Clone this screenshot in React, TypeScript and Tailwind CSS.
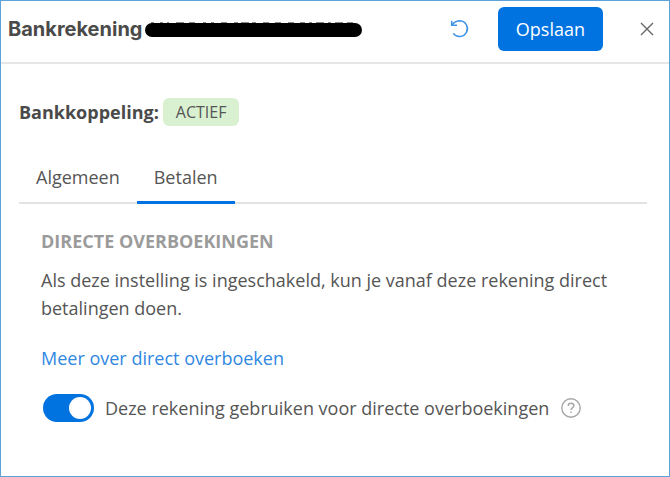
import { useState } from 'react';

const TABS = ['Algemeen', 'Betalen'];

// x position and width of the character tops that stick out above the marker
const TIPS = [
  [6, 3], [15, 3], [22, 2], [31, 8], [44, 6], [58, 3], [66, 3], [76, 6], [89, 4],
  [96, 8], [107, 4], [118, 6], [130, 6], [143, 6], [155, 5], [164, 3], [171, 8],
  [183, 3], [190, 8], [202, 6],
];

function RedactedNumber() {
  return (
    <svg className="h-5 w-[217px] shrink-0" viewBox="0 0 217 20" aria-hidden="true">
      {TIPS.map(([x, width]) => (
        <rect key={x} x={x} y="3" width={width} height="2" fill="#8a8a8a" />
      ))}
      <rect x="0" y="4" width="217" height="14" rx="7" fill="#000" />
    </svg>
  );
}

function ResetIcon() {
  return (
    <svg className="h-5 w-5" viewBox="0 0 20 20" fill="none" stroke="#3d93e6" strokeWidth="1.5" aria-hidden="true">
      <path d="M1.7 1.8V6.2H7" />
      <path d="M2 6C4 2.9 6.6 1.7 10 1.7A7.9 7.9 0 1 1 3.2 14.4" />
    </svg>
  );
}

function CloseIcon() {
  return (
    <svg className="h-3.5 w-3.5" viewBox="0 0 14 14" fill="none" stroke="#666" strokeWidth="1.4" aria-hidden="true">
      <path d="M1 1L13 13M13 1L1 13" />
    </svg>
  );
}

function HelpIcon() {
  return (
    <svg className="h-5 w-5" viewBox="0 0 20 20" fill="none" stroke="#a6a6a6" strokeWidth="1.4" aria-hidden="true">
      <circle cx="10" cy="10" r="9.2" />
      <path d="M7.2 8C7.2 6.2 8.4 5.3 10 5.3S12.9 6.3 12.9 7.8C12.9 9.7 10 9.7 10 12" />
      <path d="M10 13.4V15" />
    </svg>
  );
}

export default function App() {
  const [tab, setTab] = useState('Betalen');
  const [enabled, setEnabled] = useState(true);

  return (
    <div className="min-h-screen border border-[#5ba3da] bg-white font-['Open_Sans',sans-serif] text-lg leading-7 text-[#555]">
      <header className="flex items-center border-b-2 border-[#e6e6e6] pt-1.5 pr-[15px] pb-[11px] pl-[7px]">
        <h1 className="flex items-center gap-0.5 font-['Inter',sans-serif] text-xl font-bold text-[#4a4a4a]">
          Bankrekening
          <RedactedNumber />
        </h1>
        <button type="button" aria-label="Herstellen" className="ml-auto">
          <ResetIcon />
        </button>
        <button type="button" className="ml-7 h-11 rounded-md bg-[#0073e0] px-[18px] text-white">
          Opslaan
        </button>
        <button type="button" aria-label="Sluiten" className="ml-[37px]">
          <CloseIcon />
        </button>
      </header>

      <main className="pt-[34px] pr-[22px] pl-[18px]">
        <div className="flex items-center gap-1">
          <span className="font-bold text-[#4a4a4a]">Bankkoppeling:</span>
          <span className="rounded-md bg-[#d9f1d1] px-[13px] text-base leading-7 font-medium">ACTIEF</span>
        </div>

        <div role="tablist" className="mt-[35px] flex border-b-2 border-[#e3e3e3]">
          {TABS.map((name) => (
            <button
              key={name}
              type="button"
              role="tab"
              aria-selected={tab === name}
              onClick={() => setTab(name)}
              className={`-mb-0.5 border-b-3 px-[17px] pt-0.5 pb-2.5 ${tab === name ? 'border-[#0073e0]' : 'border-transparent'}`}
            >
              {name}
            </button>
          ))}
        </div>

        <section className="px-[22px] pt-[23px]">
          <h2 className="text-lg leading-7 font-bold text-[#9b9b9b]">DIRECTE OVERBOEKINGEN</h2>
          <p className="mt-[11px]">
            Als deze instelling is ingeschakeld, kun je vanaf deze rekening direct betalingen doen.
          </p>
          <a href="#" className="mt-[22px] block w-fit text-[#3088e2]">
            Meer over direct overboeken
          </a>

          <div className="mt-[22px] flex items-center">
            <label className="flex items-center gap-[11px] pl-0.5">
              <input
                type="checkbox"
                role="switch"
                checked={enabled}
                onChange={(e) => setEnabled(e.target.checked)}
                className="h-7 w-[51px] shrink-0 appearance-none rounded-full bg-gray-300 p-[3px] before:block before:h-[22px] before:w-[22px] before:rounded-full before:bg-white checked:bg-[#0073e0] checked:before:ml-[23px]"
              />
              Deze rekening gebruiken voor directe overboekingen
            </label>
            <button type="button" aria-label="Meer informatie" className="ml-3">
              <HelpIcon />
            </button>
          </div>
        </section>
      </main>
    </div>
  );
}
